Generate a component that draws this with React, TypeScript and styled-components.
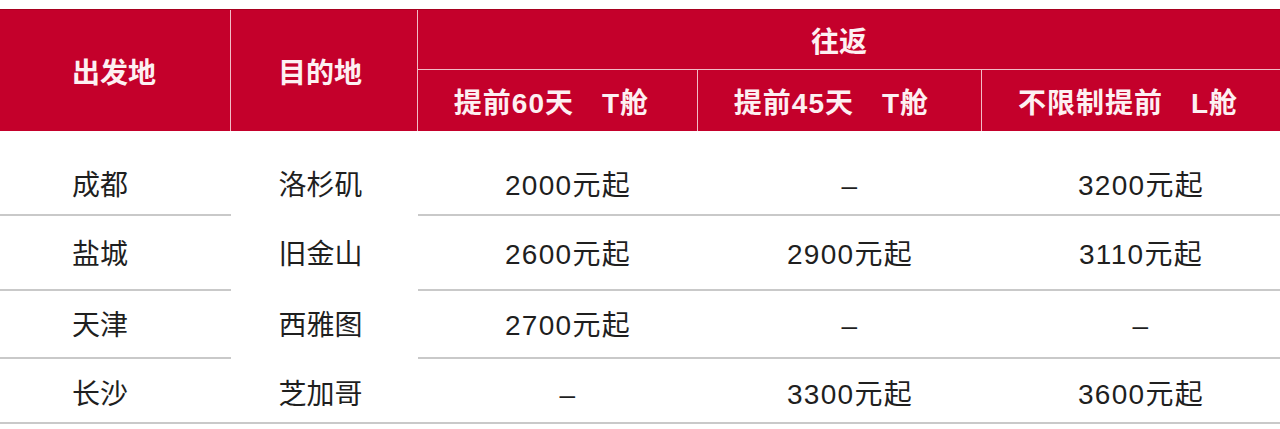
import { FC } from 'react'
import styled, { createGlobalStyle } from 'styled-components'

const GlobalStyle = createGlobalStyle`
  html, body {
    margin: 0;
    padding: 0;
    background: #ffffff;
  }
  body {
    font-family: 'Liberation Sans', 'Noto Sans CJK SC', sans-serif;
  }
`

const RED = '#c4002b'
const HEAD_LINE = '#f2bcc6'
const ROW_LINE = '#c9c9c9'

type Row = {
  from: string
  to: string
  prices: string[]
  height: number
  pad: number
  last?: boolean
}

const rows: Row[] = [
  { from: '成都', to: '洛杉矶', prices: ['2000元起', '–', '3200元起'], height: 85, pad: 41 },
  { from: '盐城', to: '旧金山', prices: ['2600元起', '2900元起', '3110元起'], height: 75, pad: 25 },
  { from: '天津', to: '西雅图', prices: ['2700元起', '–', '–'], height: 68, pad: 21 },
  { from: '长沙', to: '芝加哥', prices: ['–', '3300元起', '3600元起'], height: 65, pad: 22, last: true },
]

const Table = styled.div`
  padding-top: 9px;
  width: 1280px;
`

const Head = styled.div`
  display: grid;
  grid-template-columns: 230px 186px 279px 283px 1fr;
  grid-template-rows: 59px 61px;
  gap: 1px;
  background: ${HEAD_LINE};
  border-top: 1px solid #a8001f;
`

const HeadCell = styled.div<{ $col: string; $row: string; $align?: 'left' | 'center'; $shift?: number }>`
  grid-column: ${p => p.$col};
  grid-row: ${p => p.$row};
  background: ${RED};
  color: #fdf0f2;
  font-size: 28px;
  font-weight: 700;
  letter-spacing: ${p => (p.$row === '2' ? '1px' : '0')};
  display: flex;
  align-items: center;
  justify-content: ${p => (p.$align === 'left' ? 'flex-start' : 'center')};
  padding-left: ${p => (p.$align === 'left' ? '72px' : '0')};
  padding-right: ${p => (p.$shift ? `${p.$shift}px` : '0')};
  white-space: nowrap;
`

const Cabin = styled.span`
  margin-left: 28px;
`

const BodyRow = styled.div<{ $h: number }>`
  display: grid;
  grid-template-columns: 231px 187px 280px 284px 1fr;
  height: ${p => p.$h}px;
`

const Cell = styled.div<{ $pad: number; $line: boolean; $kind: 'left' | 'mid' | 'price' }>`
  box-sizing: border-box;
  display: flex;
  align-items: flex-start;
  justify-content: ${p => (p.$kind === 'left' ? 'flex-start' : 'center')};
  padding-top: ${p => p.$pad}px;
  padding-left: ${p => (p.$kind === 'left' ? '72px' : p.$kind === 'price' ? '20px' : '0')};
  padding-right: ${p => (p.$kind === 'mid' ? '8px' : '0')};
  border-bottom: 2px solid ${p => (p.$line ? ROW_LINE : 'transparent')};
  color: #1f1f1f;
  font-size: 28px;
  line-height: 28px;
  font-weight: 400;
  letter-spacing: ${p => (p.$kind === 'price' ? '1.3px' : '0')};
  white-space: nowrap;
`

const App: FC = () => (
  <Table>
    <GlobalStyle />
    <Head>
      <HeadCell $col="1" $row="1 / 3" $align="left">出发地</HeadCell>
      <HeadCell $col="2" $row="1 / 3" $shift={8}>目的地</HeadCell>
      <HeadCell $col="3 / 6" $row="1" $shift={20}>往返</HeadCell>
      <HeadCell $col="3" $row="2" $shift={12}>
        提前60天<Cabin>T舱</Cabin>
      </HeadCell>
      <HeadCell $col="4" $row="2" $shift={16}>
        提前45天<Cabin>T舱</Cabin>
      </HeadCell>
      <HeadCell $col="5" $row="2" $shift={6}>
        不限制提前<Cabin>L舱</Cabin>
      </HeadCell>
    </Head>
    {rows.map(r => (
      <BodyRow key={r.from} $h={r.height}>
        <Cell $pad={r.pad} $line $kind="left">{r.from}</Cell>
        <Cell $pad={r.pad} $line={!!r.last} $kind="mid">{r.to}</Cell>
        {r.prices.map((p, i) => (
          <Cell key={i} $pad={r.pad} $line $kind="price">{p}</Cell>
        ))}
      </BodyRow>
    ))}
  </Table>
)

export default App
